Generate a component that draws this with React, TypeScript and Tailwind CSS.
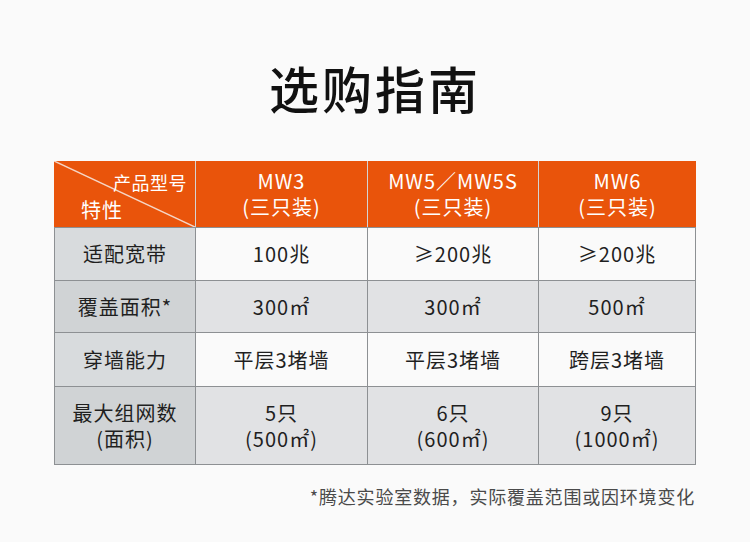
import React from 'react';

const cols = 'grid grid-cols-[142px_172px_171px_157px]';

type Row = {
  label: string[];
  values: string[][];
  h: string;
  shade: boolean;
};

const rows: Row[] = [
  { label: ['适配宽带'], values: [['100兆'], ['≥200兆'], ['≥200兆']], h: 'h-[53px]', shade: false },
  { label: ['覆盖面积*'], values: [['300㎡'], ['300㎡'], ['500㎡']], h: 'h-[52px]', shade: true },
  { label: ['穿墙能力'], values: [['平层3堵墙'], ['平层3堵墙'], ['跨层3堵墙']], h: 'h-[54px]', shade: false },
  {
    label: ['最大组网数', '(面积)'],
    values: [['5只', '(500㎡)'], ['6只', '(600㎡)'], ['9只', '(1000㎡)']],
    h: 'h-[78px]',
    shade: true,
  },
];

const models = [
  ['MW3', '(三只装)'],
  ['MW5／MW5S', '(三只装)'],
  ['MW6', '(三只装)'],
];

const Lines = ({ lines }: { lines: string[] }) => (
  <div className="flex flex-col items-center">
    {lines.map((l) => (
      <div key={l} className="h-[26px] leading-[26px] overflow-visible">
        {l}
      </div>
    ))}
  </div>
);

export default function App() {
  return (
    <div
      className="w-[750px] h-[542px] bg-[#fafafa] flex flex-col items-center text-[#1f1f1f]"
      style={{ fontFamily: '"Noto Sans CJK SC", "Noto Sans", sans-serif' }}
    >
      <h1 className="mt-[55px] h-[64px] leading-[64px] text-[50px] font-medium tracking-[3px] text-[#111]">
        选购指南
      </h1>

      <div className="mt-[42px] w-[642px]">
        {/* header */}
        <div className={`${cols} h-[67px] bg-[#e9540b] text-white text-[20px] tracking-[1px] border-b border-[#8d9093]`}>
          <div className="relative flex flex-col pt-[8px] gap-[2px] border-r border-[#d4d4d4]">
            <svg className="absolute inset-0 w-full h-full" preserveAspectRatio="none" viewBox="0 0 100 100">
              <line x1="0" y1="0" x2="100" y2="100" stroke="#f5d6c6" strokeWidth="1.5" vectorEffect="non-scaling-stroke" />
            </svg>
            <div className="relative self-end pr-[8px] h-[26px] leading-[26px] text-[18px] tracking-[0.5px]">产品型号</div>
            <div className="relative self-start pl-[27px] h-[26px] leading-[26px]">特性</div>
          </div>
          {models.map((m, i) => (
            <div
              key={m[0]}
              className={`flex items-center justify-center ${i < 2 ? 'border-r border-[#d4d4d4]' : ''}`}
            >
              <Lines lines={m} />
            </div>
          ))}
        </div>

        {/* body */}
        {rows.map((r) => (
          <div key={r.label[0]} className={`${cols} ${r.h} text-[20px] tracking-[1px] border-b border-[#8d9093]`}>
            <div
              className={`flex items-center justify-center border-l border-r border-[#8d9093] ${
                r.shade ? 'bg-[#d0d3d5]' : 'bg-[#d8dbdd]'
              }`}
            >
              <Lines lines={r.label} />
            </div>
            {r.values.map((v, i) => (
              <div
                key={i}
                className={`flex items-center justify-center border-r border-[#8d9093] ${
                  r.shade ? 'bg-[#e1e2e4]' : 'bg-[#fafafa]'
                }`}
              >
                <Lines lines={v} />
              </div>
            ))}
          </div>
        ))}

        <p className="mt-[19px] text-right pr-[1px] text-[18px] leading-[24px] tracking-[0.8px] text-[#4a4a4a]">
          *腾达实验室数据，实际覆盖范围或因环境变化
        </p>
      </div>
    </div>
  );
}
